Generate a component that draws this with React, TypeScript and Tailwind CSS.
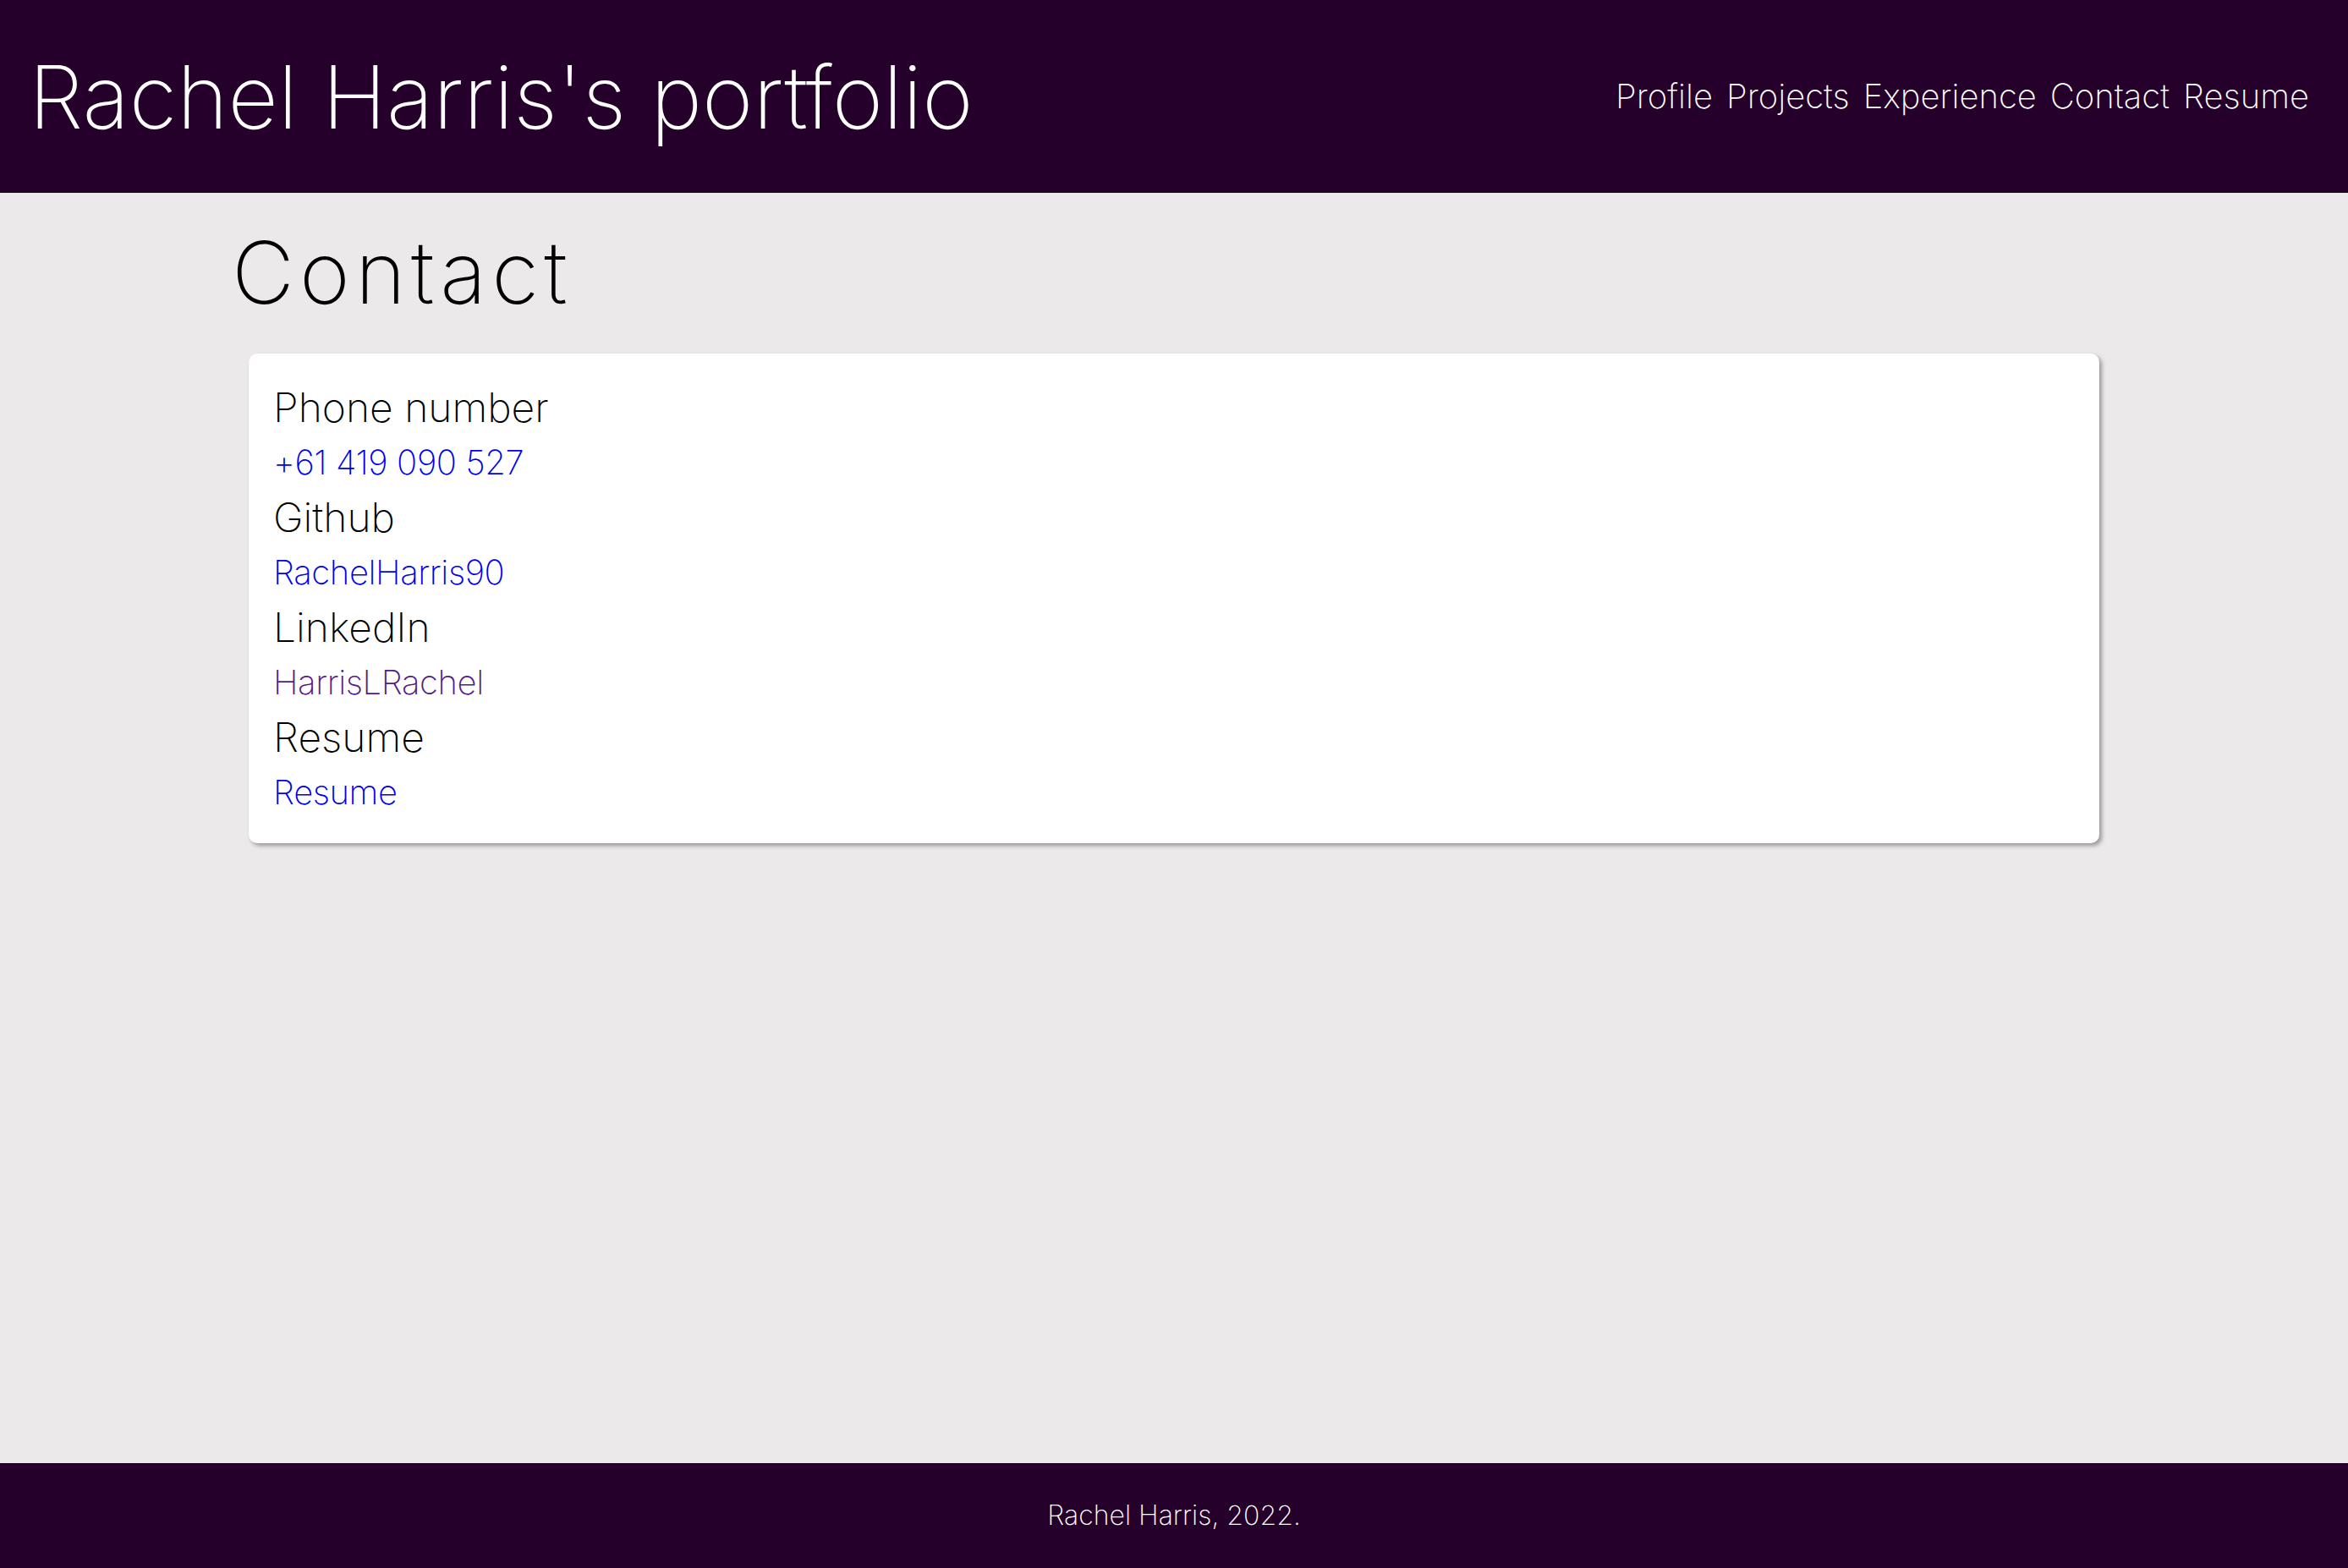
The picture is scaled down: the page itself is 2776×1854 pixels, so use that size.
const font = { fontFamily: 'Inter, "Noto Sans", sans-serif' };

const navItems = ['Profile', 'Projects', 'Experience', 'Contact', 'Resume'];

const contacts = [
  { label: 'Phone number', value: '+61 419 090 527', visited: false },
  { label: 'Github', value: 'RachelHarris90', visited: false },
  { label: 'LinkedIn', value: 'HarrisLRachel', visited: true },
  { label: 'Resume', value: 'Resume', visited: false },
];

function Header() {
  return (
    <header className="h-[228px] bg-[#25002b] flex items-center justify-between pl-[34px] pr-[46px]">
      <h1 className="text-[103px] leading-none font-extralight text-white">Rachel Harris's portfolio</h1>
      <nav className="flex items-center gap-[16px]">
        {navItems.map((item) => (
          <a key={item} href="#" className="text-[40px] leading-none font-extralight text-white">
            {item}
          </a>
        ))}
      </nav>
    </header>
  );
}

function ContactCard() {
  return (
    <div className="mx-[18px] mt-[45px] bg-white rounded-[10px] shadow-[3px_3px_5px_rgba(0,0,0,0.35)] pl-[29px] pt-[29px] pb-[30px]">
      {contacts.map((c) => (
        <div key={c.label}>
          <h2 className="text-[48px] leading-[69px] font-extralight text-black">{c.label}</h2>
          <a
            href="#"
            className={`block text-[40px] leading-[61px] font-extralight tracking-[-0.01em] ${c.visited ? 'text-[#551a8b]' : 'text-[#0000ee]'}`}
          >
            {c.value}
          </a>
        </div>
      ))}
    </div>
  );
}

export default function App() {
  return (
    <div className="min-h-screen flex flex-col bg-[#ebe9ea]" style={font}>
      <Header />
      <main className="flex-1 px-[276px] pt-[43px]">
        <h1 className="-ml-[2px] text-[102px] leading-none font-extralight tracking-[0.06em] text-black">Contact</h1>
        <ContactCard />
      </main>
      <footer className="h-[124px] bg-[#25002b] flex items-center justify-center">
        <p className="text-[32px] font-extralight text-white">Rachel Harris, 2022.</p>
      </footer>
    </div>
  );
}
